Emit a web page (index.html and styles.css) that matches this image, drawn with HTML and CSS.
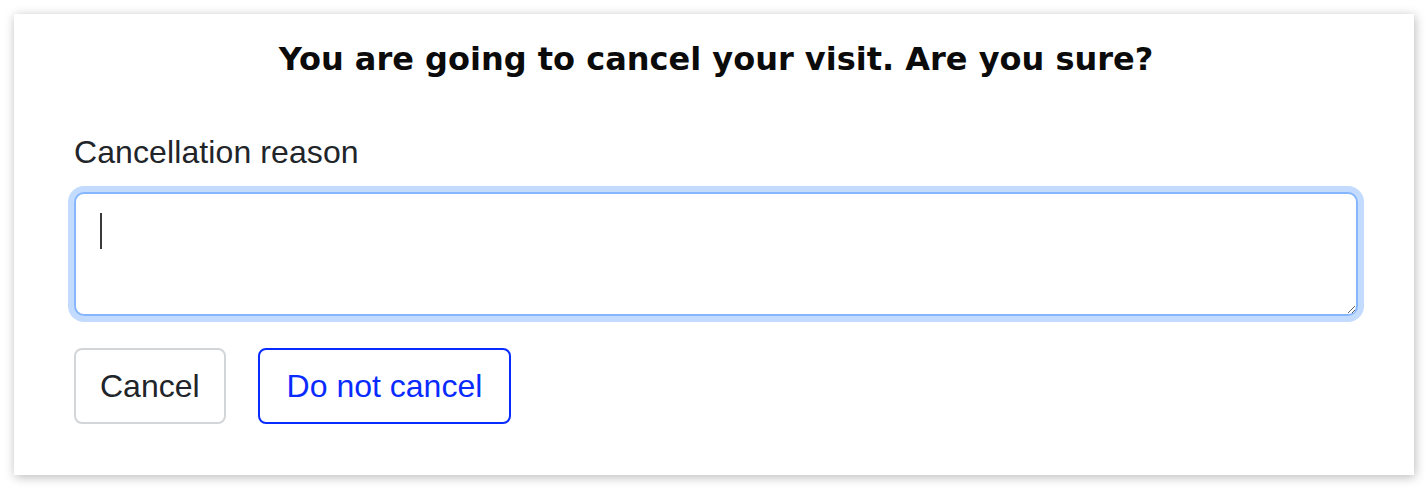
FILE: index.html
```html
<!DOCTYPE html>
<html lang="en">
<head>
<meta charset="utf-8">
<title>Cancel visit</title>
<link rel="stylesheet" href="styles.css">
</head>
<body>
<div class="card">
  <h1 class="title">You are going to cancel your visit. Are you sure?</h1>
  <label class="label" for="reason">Cancellation reason</label>
  <div class="field">
    <textarea id="reason" class="input"></textarea>
    <span class="caret"></span>
  </div>
  <div class="actions">
    <button class="btn btn-secondary" type="button">Cancel</button>
    <button class="btn btn-primary" type="button">Do not cancel</button>
  </div>
</div>
</body>
</html>
```
FILE: styles.css
```css
html, body {
  margin: 0;
  background: #ffffff;
}
body {
  padding: 14px;
}
.card {
  background: #fff;
  box-shadow: 1px 2px 10px rgba(0, 0, 0, 0.28);
  padding: 27px 56px 51px 60px;
  display: flex;
  flex-direction: column;
  align-items: stretch;
}
.title {
  margin: 0 0 51px 0;
  font-family: "DejaVu Sans", Verdana, sans-serif;
  font-weight: bold;
  font-size: 32px;
  line-height: 36px;
  text-align: center;
  color: #0b0b0b;
}
.label {
  font-family: "Liberation Sans", Arial, sans-serif;
  font-size: 32px;
  line-height: 48px;
  letter-spacing: 0.1px;
  color: #212529;
  margin-bottom: 16px;
}
.field {
  position: relative;
}
.input {
  display: block;
  width: 100%;
  box-sizing: border-box;
  height: 124px;
  margin: 0;
  padding: 12px 24px;
  border: 2px solid #86b7fe;
  border-radius: 10px;
  box-shadow: 0 0 0 6px #c2dbfe;
  outline: none;
  font-family: "Liberation Sans", Arial, sans-serif;
  font-size: 32px;
  line-height: 48px;
  color: #212529;
  background: #fff;
}
.caret {
  position: absolute;
  left: 26px;
  top: 21px;
  width: 2px;
  height: 36px;
  background: #3a3a3a;
}
.actions {
  display: flex;
  gap: 32px;
  margin-top: 32px;
}
.btn {
  font-family: "Liberation Sans", Arial, sans-serif;
  font-size: 32px;
  line-height: 48px;
  padding: 12px 24px;
  border-radius: 8px;
  background: #fff;
  cursor: pointer;
  margin: 0;
}
.btn-secondary {
  border: 2px solid #d3d6d9;
  color: #212529;
}
.btn-primary {
  border: 2px solid #0a2bff;
  color: #0a2bff;
  padding: 12px 27px;
}
```
